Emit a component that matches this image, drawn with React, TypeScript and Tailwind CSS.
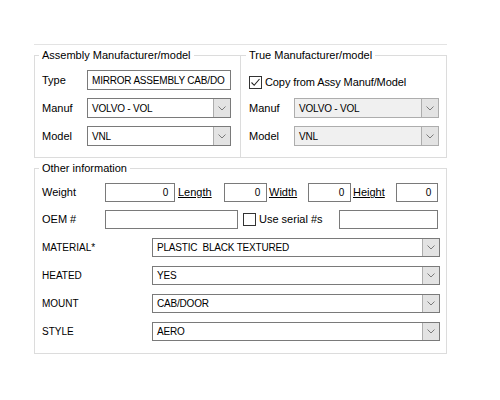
import React from 'react';

function Chevron() {
  return (
    <svg width="8" height="5" viewBox="0 0 8 5">
      <polyline points="0.5,0.5 4,4 7.5,0.5" fill="none" stroke="#7a7a7a" strokeWidth="1" />
    </svg>
  );
}

function Combo({ value, width, disabled }: { value: string; width: string; disabled?: boolean }) {
  return (
    <div
      className={`flex ${width} h-full border ${
        disabled ? 'border-[#adadad] bg-[#f0f0f0]' : 'border-[#7a7a7a] bg-white'
      }`}
    >
      <span className="flex-1 flex items-center pl-[4px] text-[10px] tracking-[-0.2px] text-black whitespace-pre overflow-hidden">
        {value}
      </span>
      <span className="w-[17px] flex items-center justify-center border-l border-[#adadad] bg-[#e3e3e3]">
        <Chevron />
      </span>
    </div>
  );
}

function TextBox({ value, width, right }: { value?: string; width: string; right?: boolean }) {
  return (
    <div
      className={`${width} h-full border border-[#7a7a7a] bg-white flex items-center px-[4px] text-[10px] tracking-[-0.2px] text-black whitespace-nowrap overflow-hidden ${
        right ? 'justify-end pr-[6px]' : ''
      }`}
    >
      {value}
    </div>
  );
}

function CheckBox({ checked }: { checked?: boolean }) {
  return (
    <span className="w-[13px] h-[13px] border border-[#333] bg-white flex items-center justify-center">
      {checked && (
        <svg width="11" height="11" viewBox="0 0 11 11">
          <polyline points="1.5,5.5 4.2,8.3 9.5,2" fill="none" stroke="#222" strokeWidth="1.1" />
        </svg>
      )}
    </span>
  );
}

const attributes = [
  { label: 'MATERIAL*', value: 'PLASTIC  BLACK TEXTURED' },
  { label: 'HEATED', value: 'YES' },
  { label: 'MOUNT', value: 'CAB/DOOR' },
  { label: 'STYLE', value: 'AERO' },
];

export default function App() {
  return (
    <div className="w-[500px] h-[400px] bg-white font-['Liberation_Sans',Arial,sans-serif] text-[11px] text-black">
      <div className="pt-[44px] pl-[34px]">
        <div className="w-[413px] border-t border-[#e3e3e3] pt-[4px]">
          {/* top groups */}
          <div className="flex">
            <fieldset className="w-[206px] h-[109px] border border-r-0 border-[#dcdcdc] pl-[4px]">
              <legend className="px-[3px] leading-[13px]">Assembly Manufacturer/model</legend>
              <div className="mt-[8px] flex flex-col gap-[8px]">
                <div className="flex items-center h-[20px]">
                  <span className="w-[48px] pl-[3px]">Type</span>
                  <TextBox value="MIRROR ASSEMBLY CAB/DO" width="w-[144px]" />
                </div>
                <div className="flex items-center h-[20px]">
                  <span className="w-[48px] pl-[3px]">Manuf</span>
                  <Combo value="VOLVO - VOL" width="w-[144px]" />
                </div>
                <div className="flex items-center h-[20px]">
                  <span className="w-[48px] pl-[3px]">Model</span>
                  <Combo value="VNL" width="w-[144px]" />
                </div>
              </div>
            </fieldset>
            <fieldset className="w-[207px] h-[109px] border border-[#dcdcdc] pl-[5px]">
              <legend className="px-[3px] leading-[13px]">True Manufacturer/model</legend>
              <div className="mt-[14px] flex items-center h-[13px] pl-[3px] gap-[3px]">
                <CheckBox checked />
                <span className="tracking-[-0.1px]">Copy from Assy Manuf/Model</span>
              </div>
              <div className="mt-[9px] flex flex-col gap-[8px]">
                <div className="flex items-center h-[20px]">
                  <span className="w-[48px] pl-[3px]">Manuf</span>
                  <Combo value="VOLVO - VOL" width="w-[145px]" disabled />
                </div>
                <div className="flex items-center h-[20px]">
                  <span className="w-[48px] pl-[3px]">Model</span>
                  <Combo value="VNL" width="w-[145px]" disabled />
                </div>
              </div>
            </fieldset>
          </div>

          {/* other information */}
          <fieldset className="mt-[4px] w-[413px] h-[192px] border border-[#dcdcdc] pl-[4px]">
            <legend className="px-[3px] leading-[13px]">Other information</legend>
            <div className="mt-[8px] flex items-center h-[19px]">
              <span className="w-[66px] pl-[3px]">Weight</span>
              <TextBox value="0" width="w-[70px]" right />
              <span className="w-[49px] pl-[3px] underline">Length</span>
              <TextBox value="0" width="w-[43px]" right />
              <span className="w-[41px] pl-[2px] underline">Width</span>
              <TextBox value="0" width="w-[43px]" right />
              <span className="w-[45px] pl-[2px] underline">Height</span>
              <TextBox value="0" width="w-[42px]" right />
            </div>
            <div className="mt-[8px] flex items-center h-[19px]">
              <span className="w-[66px] pl-[3px]">OEM #</span>
              <TextBox width="w-[133px]" />
              <span className="w-[101px] flex items-center gap-[3px] pl-[5px]">
                <CheckBox />
                <span>Use serial #s</span>
              </span>
              <TextBox width="w-[99px]" />
            </div>
            <div className="mt-[9px] flex flex-col gap-[9px]">
              {attributes.map((a) => (
                <div key={a.label} className="flex items-center h-[19px]">
                  <span className="w-[113px] pl-[3px] text-[10px]">{a.label}</span>
                  <Combo value={a.value} width="w-[288px]" />
                </div>
              ))}
            </div>
          </fieldset>
        </div>
      </div>
    </div>
  );
}
